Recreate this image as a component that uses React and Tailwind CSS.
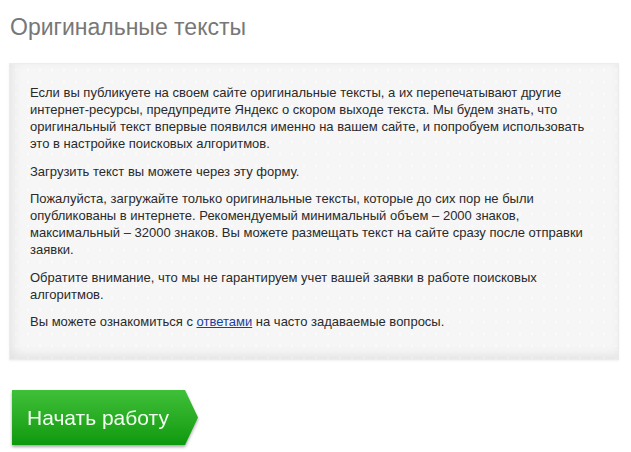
import React from 'react';

const paragraphs = [
  'Если вы публикуете на своем сайте оригинальные тексты, а их перепечатывают другие интернет-ресурсы, предупредите Яндекс о скором выходе текста. Мы будем знать, что оригинальный текст впервые появился именно на вашем сайте, и попробуем использовать это в настройке поисковых алгоритмов.',
  'Загрузить текст вы можете через эту форму.',
  'Пожалуйста, загружайте только оригинальные тексты, которые до сих пор не были опубликованы в интернете. Рекомендуемый минимальный объем – 2000 знаков, максимальный – 32000 знаков. Вы можете размещать текст на сайте сразу после отправки заявки.',
  'Обратите внимание, что мы не гарантируем учет вашей заявки в работе поисковых алгоритмов.',
];

const App = () => {
  return (
    <div className="min-h-screen bg-white font-['Liberation_Sans',Arial,sans-serif]">
      {/* Title */}
      <h1 className="pt-[14px] pl-[10px] text-[23px] leading-[27px] text-[#777]">
        Оригинальные тексты
      </h1>

      {/* Info panel */}
      <div className="mt-[22px] ml-[9px] w-[610px] h-[297px] border border-[#ececec] bg-[#f6f6f6] bg-[radial-gradient(circle,#fbfbfb_1.2px,transparent_1.6px)] bg-[length:12px_12px] shadow-[inset_0_-6px_10px_rgba(0,0,0,0.05),inset_6px_0_10px_rgba(0,0,0,0.03),0_1px_2px_rgba(0,0,0,0.06)] pt-[20px] pl-[20px]">
        <div className="w-[560px] text-[13px] leading-[17px] text-[#2a2a2a]">
          {paragraphs.map((p, i) => (
            <p key={i} className="mb-[10.5px]">
              {p}
            </p>
          ))}
          <p>
            Вы можете ознакомиться с{' '}
            <a href="#" className="text-[#1c3f9e] underline">
              ответами
            </a>{' '}
            на часто задаваемые вопросы.
          </p>
        </div>
      </div>

      {/* Start button */}
      <div className="mt-[30px] ml-[12px] w-[186px] drop-shadow-[0_2px_1.5px_rgba(0,0,0,0.35)]">
        <button className="w-[186px] h-[55px] bg-linear-to-b from-[#3ec138] to-[#0b990b] [clip-path:polygon(0_0,173px_0,186px_50%,173px_100%,0_100%)] text-left pl-[15px] text-[21px] text-[#f2fff0]">
          Начать работу
        </button>
      </div>
    </div>
  );
};

export default App;
